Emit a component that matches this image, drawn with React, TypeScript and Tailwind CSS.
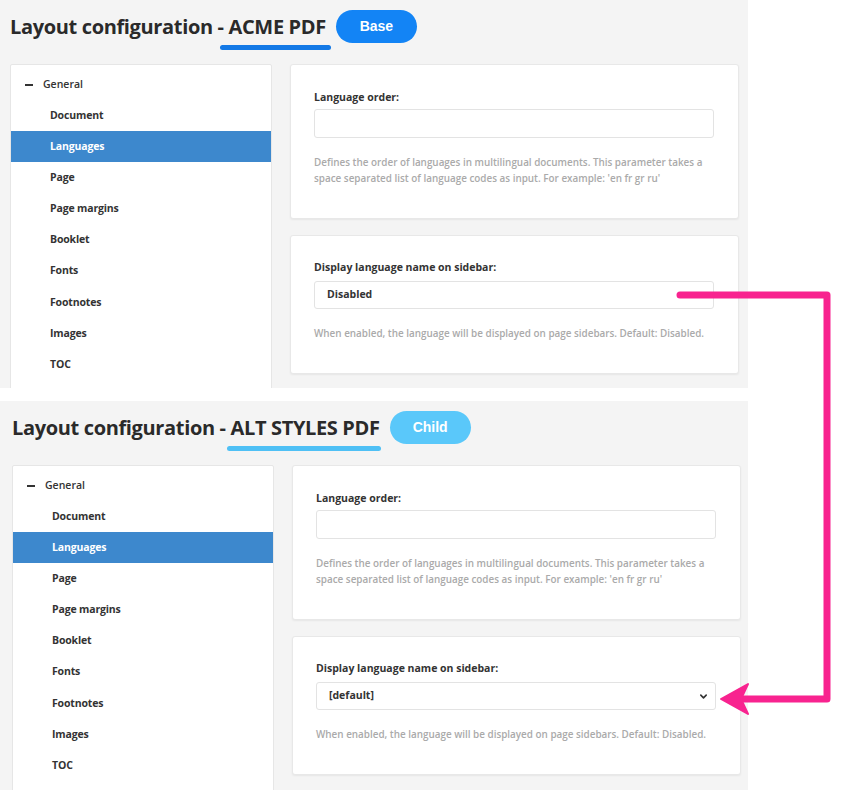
import React from "react";

const items = ["Document", "Languages", "Page", "Page margins", "Booklet", "Fonts", "Footnotes", "Images", "TOC"];

function Sidebar() {
  return (
    <div className="w-[262px] h-[420px] shrink-0 bg-white border border-[#e6e6e6] rounded-[2px] pt-[4px]">
      <div className="flex items-center h-[31px] pl-[14px] text-[10.5px] font-semibold text-[#333]">
        <span className="block w-[8px] h-[2px] bg-[#333] mr-[10px]" />
        General
      </div>
      {items.map((it) => (
        <div
          key={it}
          className={
            it === "Languages"
              ? "flex items-center h-[31.15px] pl-[39px] text-[10.5px] font-bold tracking-[-0.15px] text-white bg-[#3d88cd]"
              : "flex items-center h-[31.15px] pl-[39px] text-[10.5px] font-bold tracking-[-0.15px] text-[#333]"
          }
        >
          {it}
        </div>
      ))}
    </div>
  );
}

function Cards({ child }: { child: boolean }) {
  return (
    <div className="flex flex-col gap-[16px] w-[449px] shrink-0">
      <div className="bg-white border border-[#e8e8e8] rounded-[3px] shadow-[0_1px_2px_rgba(0,0,0,0.06)] pt-[24px] pb-[32px] px-[23px]">
        <div className="text-[10.5px] font-bold text-[#333] leading-[16px] mb-[4px]">Language order:</div>
        <div className="h-[29px] w-[400px] border border-[#e3e3e3] rounded-[3px] bg-white" />
        <div className="mt-[16px] text-[9.88px] font-semibold text-[#aaaaaa] leading-[16px] w-[400px]">
          Defines the order of languages in multilingual documents. This parameter takes a space separated list of language codes as input. For example: 'en fr gr ru'
        </div>
      </div>
      <div className="bg-white border border-[#e8e8e8] rounded-[3px] shadow-[0_1px_2px_rgba(0,0,0,0.06)] pt-[23px] pb-[32px] px-[23px]">
        <div className="text-[10.5px] font-bold text-[#333] leading-[16px] mb-[6px]">Display language name on sidebar:</div>
        <div className="h-[28px] w-[400px] border border-[#e3e3e3] rounded-[3px] bg-white flex items-center pl-[12px] pr-[6px] justify-between">
          <span className="text-[10.5px] font-bold text-[#333]">{child ? "[default]" : "Disabled"}</span>
          {child && (
            <svg width="9" height="9" viewBox="0 0 10 10" className="mr-[1px]">
              <path d="M2 3.5 L5 6.5 L8 3.5" fill="none" stroke="#333" strokeWidth="1.8" strokeLinecap="round" strokeLinejoin="round" />
            </svg>
          )}
        </div>
        <div className="mt-[16px] text-[9.88px] font-semibold text-[#aaaaaa] leading-[16px]">
          When enabled, the language will be displayed on page sidebars. Default: Disabled.
        </div>
      </div>
    </div>
  );
}

function Panel({ child }: { child: boolean }) {
  return (
    <div
      className={
        child
          ? "w-[748px] h-[389px] bg-[#f4f4f4] overflow-hidden pl-[12px]"
          : "w-[748px] h-[388px] bg-[#f4f4f4] overflow-hidden pl-[10px]"
      }
    >
      <div className="flex items-center h-[53px]">
        <h1 className="text-[20px] font-bold text-[#2a2a2a] tracking-[-0.35px] leading-none">
          Layout configuration -{" "}
          <span className="relative">
            {child ? "ALT STYLES PDF" : "ACME PDF"}
            <span
              className={
                child
                  ? "absolute left-[-4px] right-[-1px] bottom-[-10px] h-[5px] rounded-full bg-[#4fc0f5]"
                  : "absolute left-[-9px] right-[-5px] bottom-[-10px] h-[5px] rounded-full bg-[#1479e6]"
              }
            />
          </span>
        </h1>
        <div
          className={
            child
              ? "ml-[10px] w-[81px] h-[33px] rounded-full bg-[#5ac8fa] flex items-center justify-center text-white text-[14px] font-bold font-['Liberation_Sans',Arial,sans-serif]"
              : "ml-[10px] w-[81px] h-[33px] rounded-full bg-[#1384f5] flex items-center justify-center text-white text-[14px] font-bold font-['Liberation_Sans',Arial,sans-serif]"
          }
        >
          {child ? "Child" : "Base"}
        </div>
      </div>
      <div className="flex gap-[18px] pt-[11px]">
        <Sidebar />
        <Cards child={child} />
      </div>
    </div>
  );
}

export default function App() {
  return (
    <div className="relative w-[850px] h-[790px] bg-white overflow-hidden font-['Open_Sans',sans-serif]">
      <Panel child={false} />
      <div className="h-[13px]" />
      <Panel child={true} />
      <svg className="absolute left-0 top-0 pointer-events-none" width="850" height="790" viewBox="0 0 850 790">
        <path d="M680 295 L827 295 L827 699 L742 699" fill="none" stroke="#f8238f" strokeWidth="7" strokeLinecap="round" strokeLinejoin="round" />
        <path d="M721 699 L748 684 L741 699 L748 714 Z" fill="#f8238f" stroke="#f8238f" strokeWidth="2" strokeLinejoin="round" />
      </svg>
    </div>
  );
}
